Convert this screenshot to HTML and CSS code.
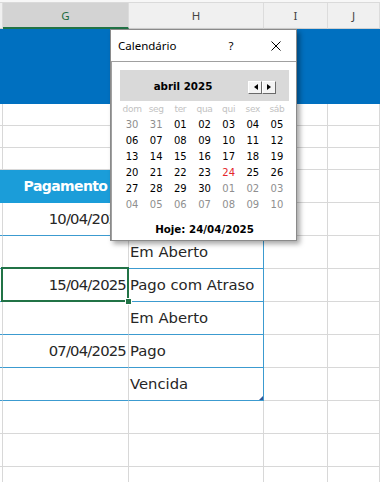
FILE: index.html
```html
<!DOCTYPE html>
<html lang="pt">
<head>
<meta charset="utf-8">
<title>Calendário</title>
<link rel="stylesheet" href="styles.css">
</head>
<body>
<div class="sheet">
  <div class="topstrip"></div>
  <div class="row colhead">
    <div class="c f"></div>
    <div class="c g">G</div>
    <div class="c h">H</div>
    <div class="c i">I</div>
    <div class="c j">J</div>
  </div>
  <div class="band"></div>
  <div class="row r22"><div class="c f"></div><div class="c g"></div><div class="c h"></div><div class="c i"></div><div class="c j"></div></div>
  <div class="row r22"><div class="c f"></div><div class="c g"></div><div class="c h"></div><div class="c i"></div><div class="c j"></div></div>
  <div class="row r22"><div class="c f"></div><div class="c g"></div><div class="c h"></div><div class="c i"></div><div class="c j"></div></div>
  <div class="row thead">
    <div class="c f t"></div>
    <div class="c g t hd">Pagamento</div>
    <div class="c h t hd"></div>
    <div class="c i"></div>
    <div class="c j"></div>
  </div>
  <div class="row trow"><div class="c f t"></div><div class="c g t num">10/04/2025</div><div class="c h t txt"></div><div class="c i"></div><div class="c j"></div></div>
  <div class="row trow"><div class="c f t"></div><div class="c g t num"></div><div class="c h t txt">Em Aberto</div><div class="c i"></div><div class="c j"></div></div>
  <div class="row trow"><div class="c f t"></div><div class="c g t num selected">15/04/2025</div><div class="c h t txt">Pago com Atraso</div><div class="c i"></div><div class="c j"></div></div>
  <div class="row trow"><div class="c f t"></div><div class="c g t num"></div><div class="c h t txt">Em Aberto</div><div class="c i"></div><div class="c j"></div></div>
  <div class="row trow"><div class="c f t"></div><div class="c g t num">07/04/2025</div><div class="c h t txt">Pago</div><div class="c i"></div><div class="c j"></div></div>
  <div class="row trow"><div class="c f t"></div><div class="c g t num"></div><div class="c h t txt resize">Vencida</div><div class="c i"></div><div class="c j"></div></div>
  <div class="row brow"><div class="c f"></div><div class="c g"></div><div class="c h"></div><div class="c i"></div><div class="c j"></div></div>
  <div class="row brow"><div class="c f"></div><div class="c g"></div><div class="c h"></div><div class="c i"></div><div class="c j"></div></div>
  <div class="row brow"><div class="c f"></div><div class="c g"></div><div class="c h"></div><div class="c i"></div><div class="c j"></div></div>
</div>

<div class="dlg">
  <div class="titlebar">
    <span class="ttl">Calendário</span>
    <span class="help">?</span>
    <span class="close"><svg width="10" height="10" viewBox="0 0 10 10"><path d="M0.5 0.5 L9.5 9.5 M9.5 0.5 L0.5 9.5" stroke="#000" stroke-width="1" fill="none"/></svg></span>
  </div>
  <div class="client">
    <div class="cal-head">
      <div class="month">abril 2025</div>
      <div class="nav"><span class="btn prev"></span><span class="btn next"></span></div>
    </div>
    <div class="days">
      <span class="dn">dom</span><span class="dn">seg</span><span class="dn">ter</span><span class="dn">qua</span><span class="dn">qui</span><span class="dn">sex</span><span class="dn">sáb</span>
      <span class="o">30</span><span class="o">31</span><span>01</span><span>02</span><span>03</span><span>04</span><span>05</span>
      <span>06</span><span>07</span><span>08</span><span>09</span><span>10</span><span>11</span><span>12</span>
      <span>13</span><span>14</span><span>15</span><span>16</span><span>17</span><span>18</span><span>19</span>
      <span>20</span><span>21</span><span>22</span><span>23</span><span class="red">24</span><span>25</span><span>26</span>
      <span>27</span><span>28</span><span>29</span><span>30</span><span class="o">01</span><span class="o">02</span><span class="o">03</span>
      <span class="o">04</span><span class="o">05</span><span class="o">06</span><span class="o">07</span><span class="o">08</span><span class="o">09</span><span class="o">10</span>
    </div>
    <div class="today">Hoje: 24/04/2025</div>
  </div>
</div>
</body>
</html>
```

FILE: styles.css
```css
body {
  margin: 0;
  width: 380px;
  height: 482px;
  overflow: hidden;
  background: #ffffff;
  position: relative;
  font-family: "DejaVu Sans", sans-serif;
}

.topstrip {
  height: 2px;
  background: #f7f7f7;
  border-bottom: 1px solid #dadada;
}

.row {
  display: grid;
  grid-template-columns: 3px 126px 135px 64px 1fr;
}

.c {
  box-sizing: border-box;
  border-right: 1px solid #d8d8d8;
  border-bottom: 1px solid #d8d8d8;
  white-space: nowrap;
  overflow: hidden;
}

.colhead .c {
  height: 26px;
  background: #f0f0f0;
  border-right-color: #dcdcdc;
  border-bottom: 1px solid #cfcfcf;
  font-family: "Noto Sans", sans-serif;
  font-size: 11.5px;
  color: #444444;
  display: flex;
  align-items: center;
  justify-content: center;
}

.colhead .g {
  background: #d3d3d3;
  border-bottom: 2px solid #217346;
  color: #1e6b41;
}

.band {
  height: 75px;
  background: #0070c0;
}

.r22 .c { height: 22px; }

.thead .c,
.trow .c,
.brow .c { height: 33px; }

.thead .t {
  background: #1b9dd9;
  border-color: #1b9dd9;
}

.hd {
  color: #ffffff;
  font-weight: bold;
  font-size: 14px;
  letter-spacing: -0.6px;
  line-height: 33px;
  text-align: center;
}

.trow .t { border-bottom-color: #3c9bd0; }
.trow .h { border-right-color: #3c9bd0; }
.thead .h { border-right-color: #3c9bd0; }

.num,
.txt {
  font-size: 14.8px;
  line-height: 32px;
  color: #262626;
}

.num {
  text-align: right;
  padding-right: 2px;
  letter-spacing: -0.8px;
}

.txt {
  padding-left: 1px;
}

.selected {
  position: relative;
  overflow: visible;
  z-index: 1;
}

.selected::before {
  content: "";
  position: absolute;
  top: -2px;
  left: -2px;
  right: -1px;
  bottom: -1px;
  border: 2px solid #217346;
}

.selected::after {
  content: "";
  position: absolute;
  right: -4px;
  bottom: -4px;
  width: 5px;
  height: 5px;
  background: #217346;
  border: 1px solid #ffffff;
  z-index: 2;
}

.resize {
  position: relative;
}

.resize::after {
  content: "";
  position: absolute;
  right: 0;
  bottom: 0;
  width: 0;
  height: 0;
  border-left: 4px solid transparent;
  border-bottom: 4px solid #2f5597;
}

/* Dialog */
.dlg {
  position: absolute;
  left: 110px;
  top: 29px;
  width: 187px;
  height: 212px;
  box-sizing: border-box;
  border: 1px solid #8a8a8a;
  background: #ffffff;
  box-shadow: 3px 3px 5px rgba(0, 0, 0, 0.35);
  display: flex;
  flex-direction: column;
  z-index: 5;
}

.titlebar {
  height: 31px;
  flex: none;
  display: flex;
  align-items: center;
  padding: 0 5px 0 7px;
  font-family: "Noto Sans", sans-serif;
  font-size: 11.5px;
  color: #000000;
}

.ttl { flex: 1; }

.help {
  width: 20px;
  text-align: center;
  margin-right: 20px;
}

.close {
  width: 30px;
  display: flex;
  justify-content: center;
}

.client {
  flex: 1;
  border-top: 1px solid #a0a0a0;
  border-left: 1px solid #a0a0a0;
  padding: 8px 0 0 8px;
}

.cal-head {
  width: 169px;
  height: 31px;
  background: #d9d9d9;
  display: flex;
  align-items: center;
}

.month {
  width: 126px;
  text-align: center;
  font-weight: bold;
  font-size: 10.3px;
  color: #000000;
}

.nav {
  display: flex;
  margin-left: 2px;
  margin-top: 3px;
}

.btn {
  width: 14px;
  height: 13px;
  box-sizing: border-box;
  background: #f4f4f4;
  border: 1px solid;
  border-color: #ffffff #6a6a6a #6a6a6a #ffffff;
  position: relative;
}

.btn::before {
  content: "";
  position: absolute;
  top: 2px;
  width: 0;
  height: 0;
  border-top: 3.5px solid transparent;
  border-bottom: 3.5px solid transparent;
}

.prev::before {
  left: 5px;
  border-right: 4px solid #000000;
}

.next::before {
  left: 4px;
  border-left: 4px solid #000000;
}

.days {
  display: grid;
  grid-template-columns: repeat(7, 1fr);
  grid-template-rows: 15px repeat(6, 16px);
  width: 169px;
  margin-top: 1px;
  font-size: 10px;
  line-height: 16px;
  text-align: center;
  color: #000000;
}

.dn {
  color: #c2c2c2;
  font-size: 9px;
  line-height: 15px;
  letter-spacing: -0.3px;
}

.o { color: #8f8f8f; }
.red { color: #e3262c; }

.today {
  width: 169px;
  margin-top: 10px;
  text-align: center;
  font-weight: bold;
  font-size: 10.3px;
  line-height: 12px;
  color: #000000;
}
```
